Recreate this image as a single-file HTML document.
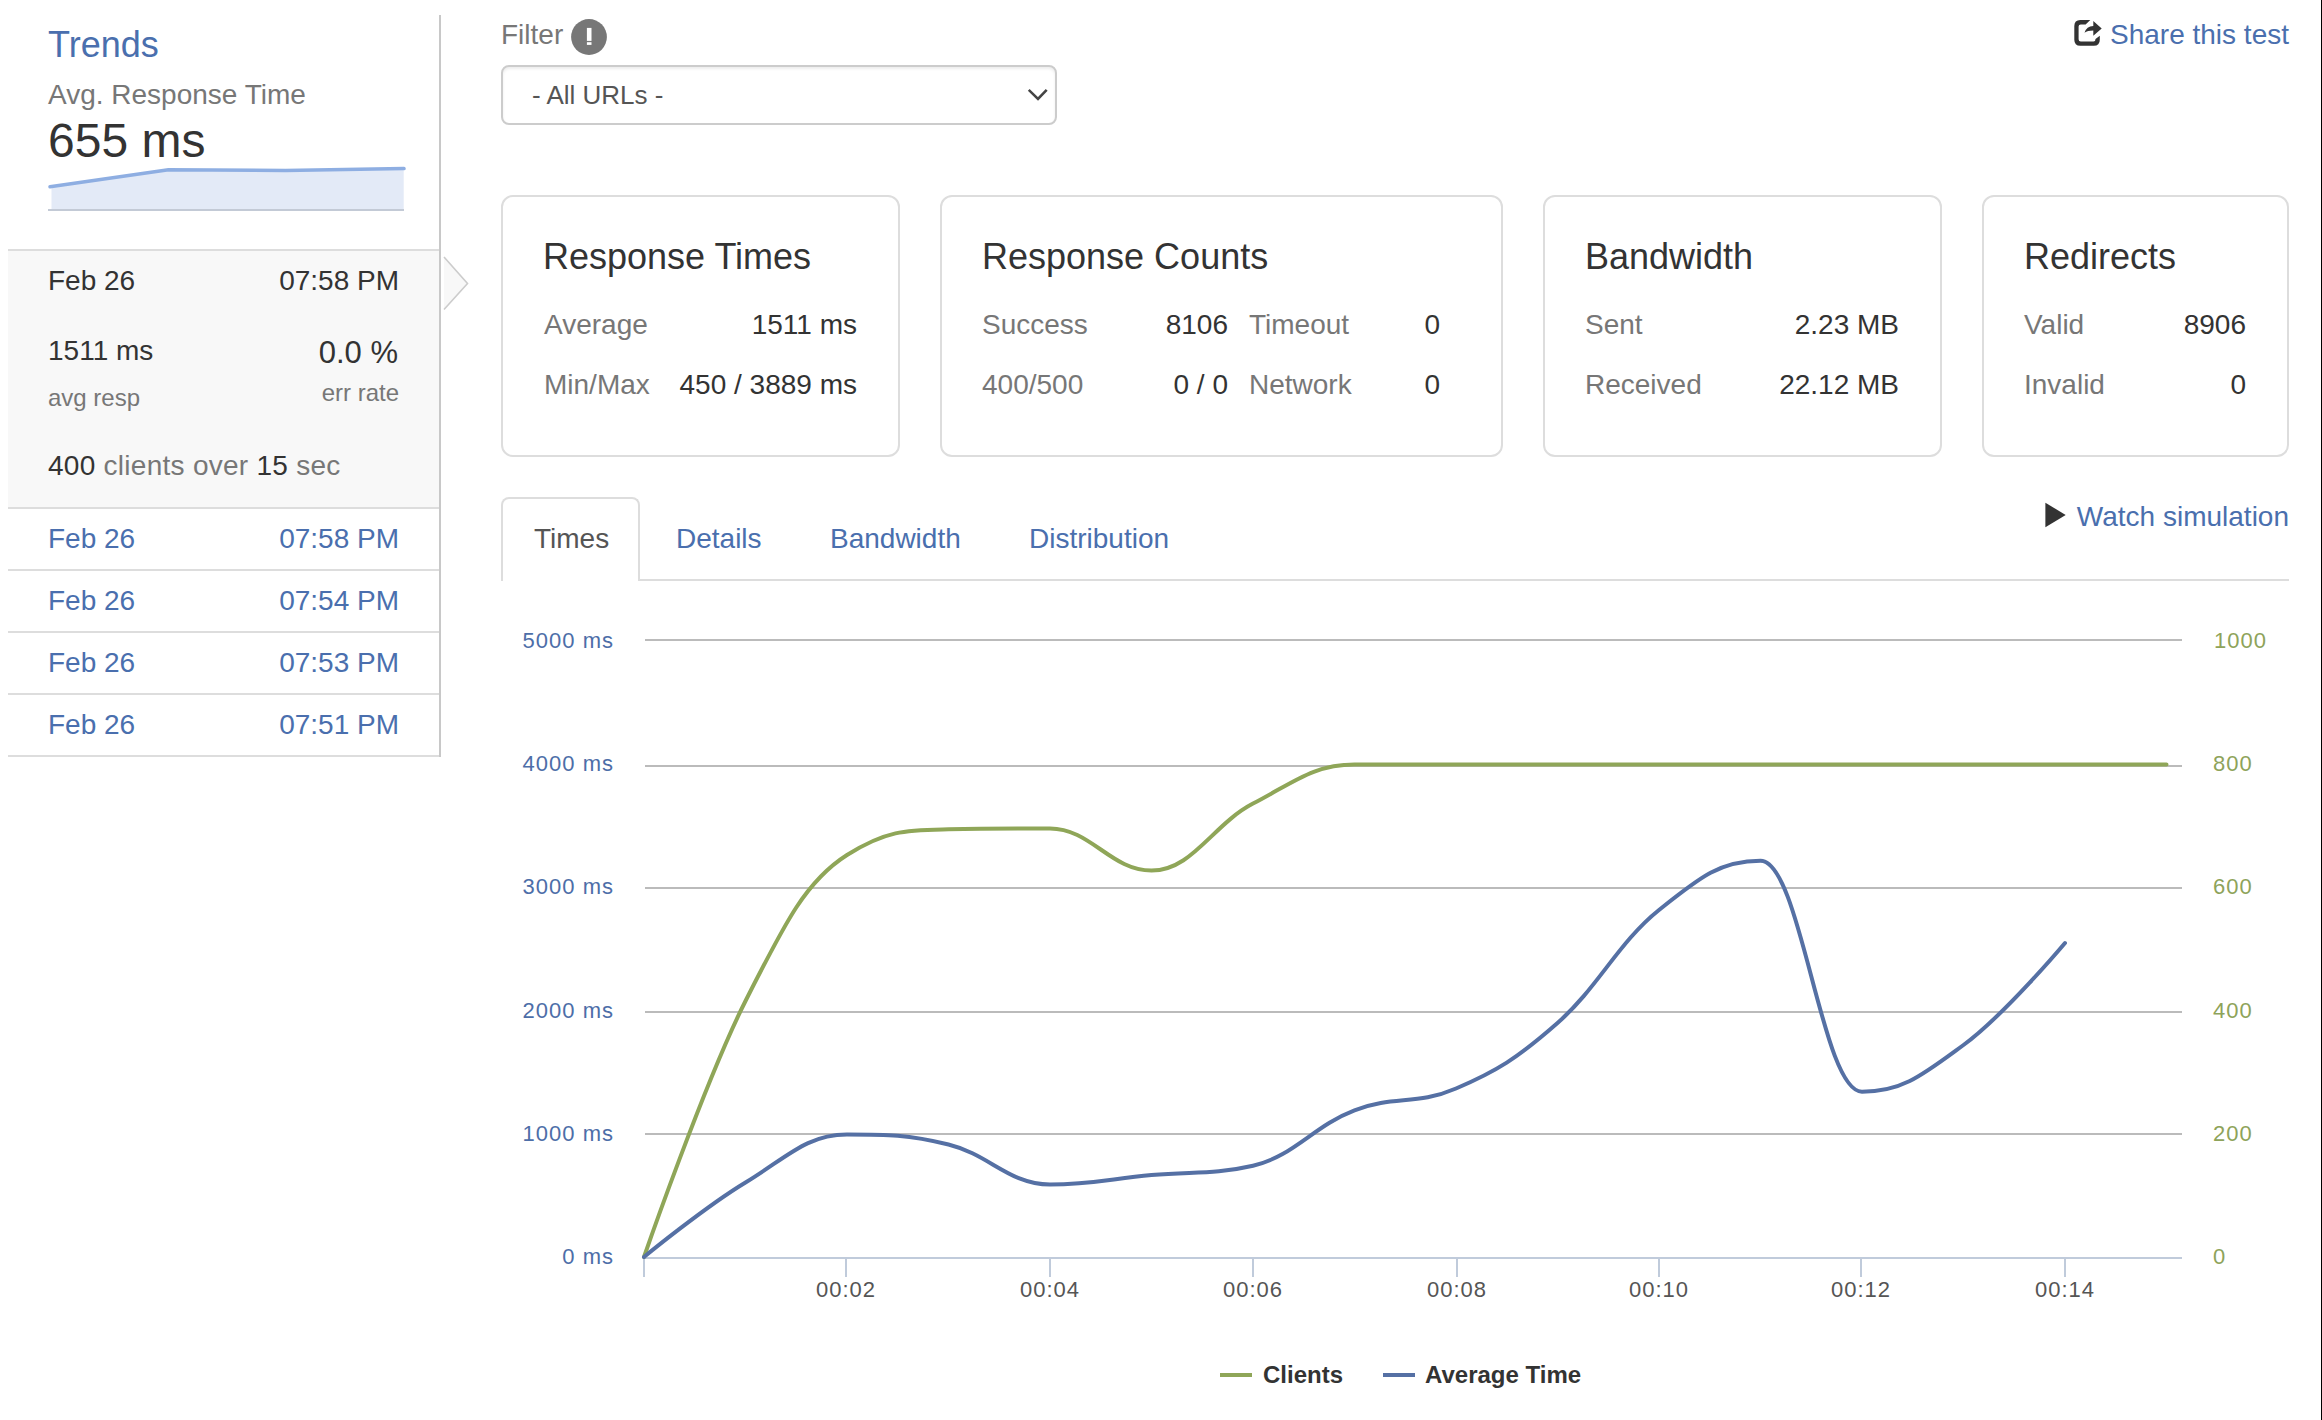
<!DOCTYPE html>
<html><head><meta charset="utf-8"><style>
html,body{margin:0;padding:0;background:#fff;width:2322px;height:1420px;overflow:hidden;position:relative;}
.t{position:absolute;line-height:0;white-space:nowrap;font-family:"Liberation Sans", sans-serif;}
</style></head><body>
<div class="t" style="left:48px;top:45px;font-size:36px;color:#4a6fae;">Trends</div>
<div class="t" style="left:48px;top:95px;font-size:28px;color:#777777;">Avg. Response Time</div>
<div class="t" style="left:48px;top:141px;font-size:48px;color:#333333;">655 ms</div>
<svg style="position:absolute;left:0;top:0" width="460" height="260">
<path d="M51.5 187 L168.5 169.7 L285.5 170.5 L403.7 168.6 L403.7 209 L51.5 209 Z" fill="#e3eaf7"/>
<rect x="48" y="209" width="356" height="2" fill="#c3cad6"/>
<path d="M50 186.8 L168.5 169.7 L285.5 170.5 L404 168.6" fill="none" stroke="#8eaee2" stroke-width="3.5" stroke-linecap="round" stroke-linejoin="round"/>
</svg>
<div style="position:absolute;left:8px;top:249px;width:431px;height:259px;background:#f8f8f8;"></div>
<div style="position:absolute;left:8px;top:249px;width:431px;height:2px;background:#dddddd;"></div>
<div style="position:absolute;left:8px;top:507px;width:431px;height:2px;background:#dddddd;"></div>
<div style="position:absolute;left:8px;top:569px;width:431px;height:2px;background:#dddddd;"></div>
<div style="position:absolute;left:8px;top:631px;width:431px;height:2px;background:#dddddd;"></div>
<div style="position:absolute;left:8px;top:693px;width:431px;height:2px;background:#dddddd;"></div>
<div style="position:absolute;left:8px;top:755px;width:431px;height:2px;background:#dddddd;"></div>
<div style="position:absolute;left:439px;top:15px;width:2px;height:742px;background:#c8c8c8;"></div>
<svg style="position:absolute;left:436px;top:250px" width="40" height="66">
<path d="M8 7 L31.5 33.5 L8 59.5" fill="#f8f8f8" stroke="#cccccc" stroke-width="1.6"/>
</svg>
<div class="t" style="left:48px;top:281px;font-size:28px;color:#333333;">Feb 26</div>
<div class="t" style="right:1923px;top:281px;font-size:28px;color:#333333;">07:58 PM</div>
<div class="t" style="left:48px;top:351px;font-size:28px;color:#333333;">1511 ms</div>
<div class="t" style="right:1924px;top:353px;font-size:31px;color:#333333;">0.0 %</div>
<div class="t" style="left:48px;top:398px;font-size:24px;color:#777777;">avg resp</div>
<div class="t" style="right:1923px;top:393px;font-size:24px;color:#777777;">err rate</div>
<div class="t" style="left:48px;top:466px;font-size:28px;color:#333333;letter-spacing:0.27px;">400 <span style="color:#777">clients over</span> 15 <span style="color:#777">sec</span></div>
<div class="t" style="left:48px;top:539px;font-size:28px;color:#4a6fae;">Feb 26</div>
<div class="t" style="right:1923px;top:539px;font-size:28px;color:#4a6fae;">07:58 PM</div>
<div class="t" style="left:48px;top:601px;font-size:28px;color:#4a6fae;">Feb 26</div>
<div class="t" style="right:1923px;top:601px;font-size:28px;color:#4a6fae;">07:54 PM</div>
<div class="t" style="left:48px;top:663px;font-size:28px;color:#4a6fae;">Feb 26</div>
<div class="t" style="right:1923px;top:663px;font-size:28px;color:#4a6fae;">07:53 PM</div>
<div class="t" style="left:48px;top:725px;font-size:28px;color:#4a6fae;">Feb 26</div>
<div class="t" style="right:1923px;top:725px;font-size:28px;color:#4a6fae;">07:51 PM</div>
<div class="t" style="left:501px;top:35px;font-size:28px;color:#777777;">Filter</div>
<svg style="position:absolute;left:566px;top:14px" width="46" height="46">
<circle cx="23" cy="23" r="17.9" fill="#777777"/>
<rect x="20.9" y="13.9" width="4.6" height="13" fill="#ffffff"/>
<rect x="20.9" y="28.2" width="4.6" height="2.7" fill="#ffffff"/>
</svg>
<div style="position:absolute;left:501px;top:65px;width:556px;height:60px;box-sizing:border-box;border:2px solid #cccccc;border-radius:8px;background:#fff;box-shadow:inset 0 2px 3px rgba(0,0,0,0.075);"></div>
<div class="t" style="left:532px;top:95px;font-size:26px;color:#555555;">- All URLs -</div>
<svg style="position:absolute;left:1016px;top:80px" width="44" height="30">
<path d="M13.7 10.8 L22 19 L29.8 10.8" fill="none" stroke="#444444" stroke-width="2.6" stroke-linecap="square"/>
</svg>
<svg style="position:absolute;left:2068px;top:14px" width="40" height="36">
<path d="M22.3 6.1 L12.3 6.1 Q6.3 6.1 6.3 12.1 L6.3 25.7 Q6.3 31.7 12.3 31.7 L25.8 31.7 Q31.8 31.7 31.8 25.7 L31.8 21.8 L27.5 25 Q27.5 27.5 25.5 27.5 L12.8 27.5 Q10.6 27.5 10.6 25.3 L10.6 12.5 Q10.6 10.4 12.8 10.4 L17.6 10.4 Z" fill="#333333"/>
<path d="M16.5 18.8 Q18.5 11.9 25.3 11.9 L25.3 7.1 L33.7 14.4 L25.3 21.8 L25.3 16.5 Q19.5 16.5 16.5 18.8 Z" fill="#333333"/>
</svg>
<div class="t" style="right:33px;top:35px;font-size:28px;color:#4a6fae;">Share this test</div>
<div style="position:absolute;left:501px;top:195px;width:399px;height:262px;box-sizing:border-box;border:2px solid #dddddd;border-radius:12px;"></div>
<div class="t" style="left:543px;top:257px;font-size:36px;color:#333333;">Response Times</div>
<div class="t" style="left:544px;top:325px;font-size:28px;color:#777777;">Average</div>
<div class="t" style="right:1465px;top:325px;font-size:28px;color:#333333;">1511 ms</div>
<div class="t" style="left:544px;top:385px;font-size:28px;color:#777777;">Min/Max</div>
<div class="t" style="right:1465px;top:385px;font-size:28px;color:#333333;">450 / 3889 ms</div>
<div style="position:absolute;left:940px;top:195px;width:563px;height:262px;box-sizing:border-box;border:2px solid #dddddd;border-radius:12px;"></div>
<div class="t" style="left:982px;top:257px;font-size:36px;color:#333333;">Response Counts</div>
<div class="t" style="left:982px;top:325px;font-size:28px;color:#777777;">Success</div>
<div class="t" style="right:1094px;top:325px;font-size:28px;color:#333333;">8106</div>
<div class="t" style="left:1249px;top:325px;font-size:28px;color:#777777;">Timeout</div>
<div class="t" style="right:882px;top:325px;font-size:28px;color:#333333;">0</div>
<div class="t" style="left:982px;top:385px;font-size:28px;color:#777777;">400/500</div>
<div class="t" style="right:1094px;top:385px;font-size:28px;color:#333333;">0 / 0</div>
<div class="t" style="left:1249px;top:385px;font-size:28px;color:#777777;">Network</div>
<div class="t" style="right:882px;top:385px;font-size:28px;color:#333333;">0</div>
<div style="position:absolute;left:1543px;top:195px;width:399px;height:262px;box-sizing:border-box;border:2px solid #dddddd;border-radius:12px;"></div>
<div class="t" style="left:1585px;top:257px;font-size:36px;color:#333333;">Bandwidth</div>
<div class="t" style="left:1585px;top:325px;font-size:28px;color:#777777;">Sent</div>
<div class="t" style="right:423px;top:325px;font-size:28px;color:#333333;">2.23 MB</div>
<div class="t" style="left:1585px;top:385px;font-size:28px;color:#777777;">Received</div>
<div class="t" style="right:423px;top:385px;font-size:28px;color:#333333;">22.12 MB</div>
<div style="position:absolute;left:1982px;top:195px;width:307px;height:262px;box-sizing:border-box;border:2px solid #dddddd;border-radius:12px;"></div>
<div class="t" style="left:2024px;top:257px;font-size:36px;color:#333333;">Redirects</div>
<div class="t" style="left:2024px;top:325px;font-size:28px;color:#777777;">Valid</div>
<div class="t" style="right:76px;top:325px;font-size:28px;color:#333333;">8906</div>
<div class="t" style="left:2024px;top:385px;font-size:28px;color:#777777;">Invalid</div>
<div class="t" style="right:76px;top:385px;font-size:28px;color:#333333;">0</div>
<div style="position:absolute;left:501px;top:497px;width:139px;height:84px;box-sizing:border-box;border:2px solid #dddddd;border-bottom:none;border-radius:8px 8px 0 0;background:#fff;"></div>
<div style="position:absolute;left:638px;top:579px;width:1651px;height:2px;background:#dddddd;"></div>
<div class="t" style="left:534px;top:539px;font-size:28px;color:#555555;">Times</div>
<div class="t" style="left:676px;top:539px;font-size:28px;color:#4a6fae;">Details</div>
<div class="t" style="left:830px;top:539px;font-size:28px;color:#4a6fae;">Bandwidth</div>
<div class="t" style="left:1029px;top:539px;font-size:28px;color:#4a6fae;">Distribution</div>
<svg style="position:absolute;left:2040px;top:498px" width="30" height="34">
<path d="M5.4 4.7 L25.7 17 L5.4 29.3 Z" fill="#333333"/>
</svg>
<div class="t" style="right:33px;top:517px;font-size:28px;color:#4a6fae;">Watch simulation</div>
<svg style="position:absolute;left:0;top:0" width="2322" height="1420">
<rect x="645" y="639" width="1537" height="2" fill="#bbbbbb"/><rect x="645" y="765" width="1537" height="2" fill="#bbbbbb"/><rect x="645" y="887" width="1537" height="2" fill="#bbbbbb"/><rect x="645" y="1011" width="1537" height="2" fill="#bbbbbb"/><rect x="645" y="1133" width="1537" height="2" fill="#bbbbbb"/><rect x="643" y="1257" width="1539" height="2" fill="#c0cbdb"/><rect x="643" y="1257" width="2" height="20" fill="#c0cbdb"/><rect x="845" y="1257" width="2" height="20" fill="#c0cbdb"/><rect x="1049" y="1257" width="2" height="20" fill="#c0cbdb"/><rect x="1252" y="1257" width="2" height="20" fill="#c0cbdb"/><rect x="1456" y="1257" width="2" height="20" fill="#c0cbdb"/><rect x="1658" y="1257" width="2" height="20" fill="#c0cbdb"/><rect x="1860" y="1257" width="2" height="20" fill="#c0cbdb"/><rect x="2064" y="1257" width="2" height="20" fill="#c0cbdb"/>
<path d="M644.0 1257.0 C644.0 1257.0 704.9 1081.4 745.5 1001.0 C786.1 920.6 806.4 880.7 847.0 855.0 C887.6 829.3 907.9 830.2 948.5 829.3 C989.1 828.4 1009.4 828.4 1050.0 828.4 C1090.6 828.4 1110.9 870.6 1151.5 870.6 C1192.1 870.6 1212.4 824.8 1253.0 803.6 C1293.6 782.4 1313.9 764.5 1354.5 764.5 C1395.1 764.5 1415.4 764.5 1456.0 764.5 C1496.6 764.5 1516.9 764.5 1557.5 764.5 C1598.1 764.5 1618.4 764.5 1659.0 764.5 C1699.6 764.5 1719.9 764.5 1760.5 764.5 C1801.1 764.5 1821.4 764.5 1862.0 764.5 C1902.6 764.5 1922.9 764.5 1963.5 764.5 C2004.1 764.5 2024.4 764.5 2065.0 764.5 C2105.6 764.5 2166.5 764.5 2166.5 764.5" fill="none" stroke="#8fa658" stroke-width="4" stroke-linecap="round" stroke-linejoin="round"/>
<path d="M644.0 1257.0 C644.0 1257.0 704.9 1207.0 745.5 1182.5 C786.1 1158.0 806.4 1134.5 847.0 1134.5 C887.6 1134.5 907.9 1134.5 948.5 1144.5 C989.1 1154.5 1009.4 1184.6 1050.0 1184.6 C1090.6 1184.6 1110.9 1178.8 1151.5 1175.0 C1192.1 1171.2 1212.4 1175.0 1253.0 1165.7 C1293.6 1156.4 1313.9 1125.7 1354.5 1110.3 C1395.1 1094.9 1415.4 1106.0 1456.0 1088.5 C1496.6 1071.0 1516.9 1058.7 1557.5 1023.0 C1598.1 987.3 1618.4 942.4 1659.0 910.0 C1699.6 877.6 1719.9 860.8 1760.5 860.8 C1801.1 860.8 1821.4 1091.7 1862.0 1091.7 C1902.6 1091.7 1922.9 1074.7 1963.5 1045.0 C2004.1 1015.3 2065.0 943.0 2065.0 943.0" fill="none" stroke="#5570a4" stroke-width="4" stroke-linecap="round" stroke-linejoin="round"/>
</svg>
<div class="t" style="right:1708px;top:641px;font-size:22px;color:#4d6ea8;letter-spacing:1px;">5000 ms</div>
<div class="t" style="right:1708px;top:764px;font-size:22px;color:#4d6ea8;letter-spacing:1px;">4000 ms</div>
<div class="t" style="right:1708px;top:887px;font-size:22px;color:#4d6ea8;letter-spacing:1px;">3000 ms</div>
<div class="t" style="right:1708px;top:1011px;font-size:22px;color:#4d6ea8;letter-spacing:1px;">2000 ms</div>
<div class="t" style="right:1708px;top:1134px;font-size:22px;color:#4d6ea8;letter-spacing:1px;">1000 ms</div>
<div class="t" style="right:1708px;top:1257px;font-size:22px;color:#4d6ea8;letter-spacing:1px;">0 ms</div>
<div class="t" style="left:2214px;top:641px;font-size:22px;color:#8ea35a;letter-spacing:1px;">1000</div>
<div class="t" style="left:2213px;top:764px;font-size:22px;color:#8ea35a;letter-spacing:1px;">800</div>
<div class="t" style="left:2213px;top:887px;font-size:22px;color:#8ea35a;letter-spacing:1px;">600</div>
<div class="t" style="left:2213px;top:1011px;font-size:22px;color:#8ea35a;letter-spacing:1px;">400</div>
<div class="t" style="left:2213px;top:1134px;font-size:22px;color:#8ea35a;letter-spacing:1px;">200</div>
<div class="t" style="left:2213px;top:1257px;font-size:22px;color:#8ea35a;letter-spacing:1px;">0</div>
<div class="t" style="left:796.0px;width:100px;text-align:center;top:1290px;font-size:22px;color:#555555;letter-spacing:1px;">00:02</div>
<div class="t" style="left:1000.0px;width:100px;text-align:center;top:1290px;font-size:22px;color:#555555;letter-spacing:1px;">00:04</div>
<div class="t" style="left:1203.0px;width:100px;text-align:center;top:1290px;font-size:22px;color:#555555;letter-spacing:1px;">00:06</div>
<div class="t" style="left:1407.0px;width:100px;text-align:center;top:1290px;font-size:22px;color:#555555;letter-spacing:1px;">00:08</div>
<div class="t" style="left:1609.0px;width:100px;text-align:center;top:1290px;font-size:22px;color:#555555;letter-spacing:1px;">00:10</div>
<div class="t" style="left:1811.0px;width:100px;text-align:center;top:1290px;font-size:22px;color:#555555;letter-spacing:1px;">00:12</div>
<div class="t" style="left:2015.0px;width:100px;text-align:center;top:1290px;font-size:22px;color:#555555;letter-spacing:1px;">00:14</div>
<div style="position:absolute;left:1220px;top:1373px;width:32px;height:4px;background:#8fa658;"></div>
<div class="t" style="left:1263px;top:1375px;font-size:24px;color:#333333;font-weight:700;">Clients</div>
<div style="position:absolute;left:1383px;top:1373px;width:32px;height:4px;background:#5570a4;"></div>
<div class="t" style="left:1425px;top:1375px;font-size:24px;color:#333333;font-weight:700;">Average Time</div>
<div style="position:absolute;left:2321px;top:0px;width:1px;height:1420px;background:#000;"></div>
</body></html>
